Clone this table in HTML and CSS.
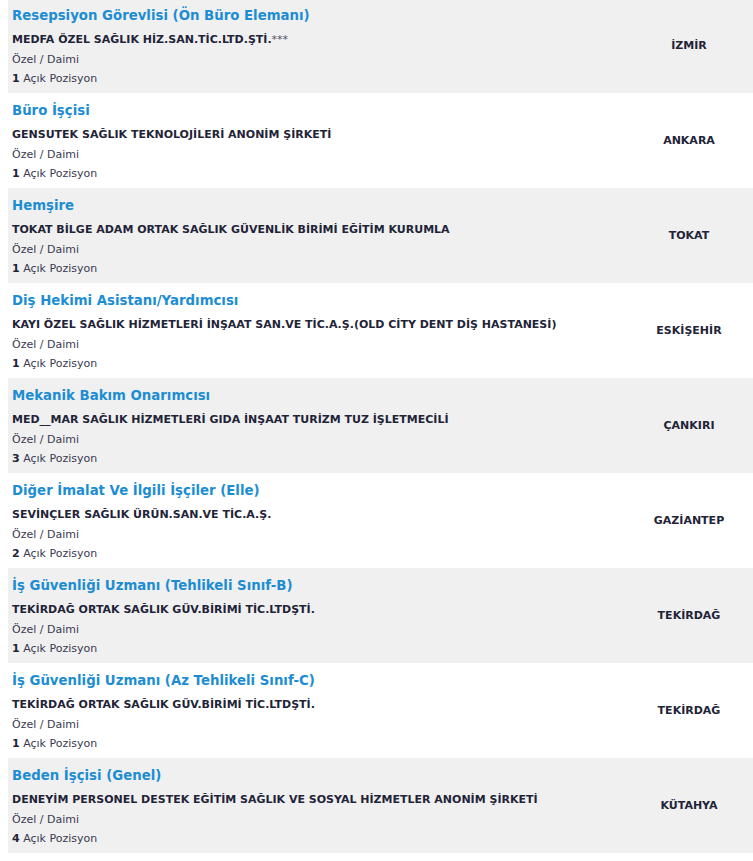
FILE: index.html
```html
<!DOCTYPE html>
<html lang="tr">
<head>
    <meta charset="UTF-8">
    <title>İş İlanları</title>
    <link rel="stylesheet" href="styles.css">
</head>
<body>
    <div class="list">
        <div class="job alt">
            <div class="info">
                <a class="title" href="#">Resepsiyon Görevlisi (Ön Büro Elemanı)</a>
                <div class="company">MEDFA ÖZEL SAĞLIK HİZ.SAN.TİC.LTD.ŞTİ.<span class="stars">***</span></div>
                <div class="type">Özel / Daimi</div>
                <div class="count"><b>1</b> Açık Pozisyon</div>
            </div>
            <div class="city">İZMİR</div>
        </div>
        <div class="job">
            <div class="info">
                <a class="title" href="#">Büro İşçisi</a>
                <div class="company">GENSUTEK SAĞLIK TEKNOLOJİLERİ ANONİM ŞİRKETİ</div>
                <div class="type">Özel / Daimi</div>
                <div class="count"><b>1</b> Açık Pozisyon</div>
            </div>
            <div class="city">ANKARA</div>
        </div>
        <div class="job alt">
            <div class="info">
                <a class="title" href="#">Hemşire</a>
                <div class="company">TOKAT BİLGE ADAM ORTAK SAĞLIK GÜVENLİK BİRİMİ EĞİTİM KURUMLA</div>
                <div class="type">Özel / Daimi</div>
                <div class="count"><b>1</b> Açık Pozisyon</div>
            </div>
            <div class="city">TOKAT</div>
        </div>
        <div class="job">
            <div class="info">
                <a class="title" href="#">Diş Hekimi Asistanı/Yardımcısı</a>
                <div class="company">KAYI ÖZEL SAĞLIK HİZMETLERİ İNŞAAT SAN.VE TİC.A.Ş.(OLD CİTY DENT DİŞ HASTANESİ)</div>
                <div class="type">Özel / Daimi</div>
                <div class="count"><b>1</b> Açık Pozisyon</div>
            </div>
            <div class="city">ESKİŞEHİR</div>
        </div>
        <div class="job alt">
            <div class="info">
                <a class="title" href="#">Mekanik Bakım Onarımcısı</a>
                <div class="company">MED__MAR SAĞLIK HİZMETLERİ GIDA İNŞAAT TURİZM TUZ İŞLETMECİLİ</div>
                <div class="type">Özel / Daimi</div>
                <div class="count"><b>3</b> Açık Pozisyon</div>
            </div>
            <div class="city">ÇANKIRI</div>
        </div>
        <div class="job">
            <div class="info">
                <a class="title" href="#">Diğer İmalat Ve İlgili İşçiler (Elle)</a>
                <div class="company">SEVİNÇLER SAĞLIK ÜRÜN.SAN.VE TİC.A.Ş.</div>
                <div class="type">Özel / Daimi</div>
                <div class="count"><b>2</b> Açık Pozisyon</div>
            </div>
            <div class="city">GAZİANTEP</div>
        </div>
        <div class="job alt">
            <div class="info">
                <a class="title" href="#">İş Güvenliği Uzmanı (Tehlikeli Sınıf-B)</a>
                <div class="company">TEKİRDAĞ ORTAK SAĞLIK GÜV.BİRİMİ TİC.LTDŞTİ.</div>
                <div class="type">Özel / Daimi</div>
                <div class="count"><b>1</b> Açık Pozisyon</div>
            </div>
            <div class="city">TEKİRDAĞ</div>
        </div>
        <div class="job">
            <div class="info">
                <a class="title" href="#">İş Güvenliği Uzmanı (Az Tehlikeli Sınıf-C)</a>
                <div class="company">TEKİRDAĞ ORTAK SAĞLIK GÜV.BİRİMİ TİC.LTDŞTİ.</div>
                <div class="type">Özel / Daimi</div>
                <div class="count"><b>1</b> Açık Pozisyon</div>
            </div>
            <div class="city">TEKİRDAĞ</div>
        </div>
        <div class="job alt">
            <div class="info">
                <a class="title" href="#">Beden İşçisi (Genel)</a>
                <div class="company">DENEYİM PERSONEL DESTEK EĞİTİM SAĞLIK VE SOSYAL HİZMETLER ANONİM ŞİRKETİ</div>
                <div class="type">Özel / Daimi</div>
                <div class="count"><b>4</b> Açık Pozisyon</div>
            </div>
            <div class="city">KÜTAHYA</div>
        </div>
    </div>
</body>
</html>
```

FILE: styles.css
```css
* {
    margin: 0;
    padding: 0;
    box-sizing: border-box;
}

body {
    font-family: 'DejaVu Sans', Verdana, sans-serif;
    background: #ffffff;
    color: #333344;
    overflow: hidden;
}

.list {
    margin-top: -2px;
    padding-left: 8px;
}

.job {
    display: grid;
    grid-template-columns: 1fr 128px;
    height: 95px;
    background: #ffffff;
}

.job.alt {
    background: #f0f0f0;
}

.info {
    padding: 9px 0 0 4px;
    display: flex;
    flex-direction: column;
}

.title {
    color: #1d8dd3;
    font-size: 13.3px;
    font-weight: bold;
    text-decoration: none;
    line-height: 18px;
    margin-bottom: 7px;
}

.company {
    color: #1f2438;
    font-size: 11px;
    font-weight: bold;
    line-height: 16px;
    margin-bottom: 4px;
}

.company .stars {
    color: #555566;
    font-weight: normal;
}

.type,
.count {
    color: #3a3a50;
    font-size: 11px;
    line-height: 16px;
    margin-bottom: 3px;
}

.count b {
    color: #1f2438;
}

.city {
    display: flex;
    align-items: center;
    justify-content: center;
    color: #1f2438;
    font-size: 11px;
    font-weight: bold;
}
```
